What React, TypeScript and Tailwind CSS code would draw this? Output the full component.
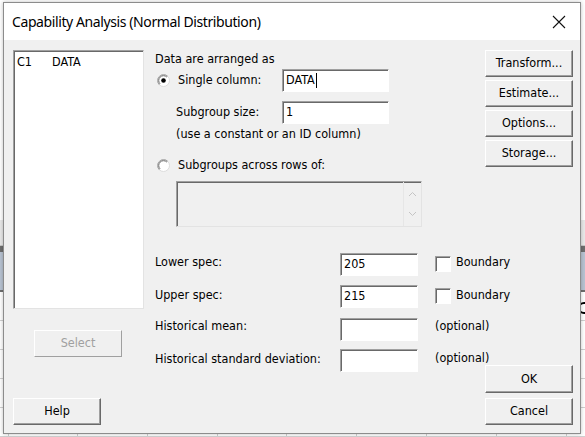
import React from 'react';

const ui = { fontFamily: '"DejaVu Sans Condensed", "DejaVu Sans", sans-serif' };

const Btn: React.FC<{ label: string; className?: string; disabled?: boolean }> = ({ label, className = '', disabled }) => (
  <div
    className={`flex h-[27px] w-[88px] shrink-0 items-center justify-center border border-t-white border-l-white border-r-[#696969] border-b-[#696969] bg-[#f0f0f0] text-[12.5px] shadow-[inset_-1px_-1px_0_#a0a0a0] ${
      disabled ? 'text-[#a0a0a0]' : 'text-black'
    } ${className}`}
  >
    {label}
  </div>
);

const Field: React.FC<{ value?: string; className?: string; caret?: boolean }> = ({ value = '', className = '', caret }) => (
  <div
    className={`flex h-[23px] shrink-0 items-center border border-t-[#a0a0a0] border-l-[#a0a0a0] border-r-white border-b-white bg-white px-[3px] text-[12.5px] shadow-[inset_1px_1px_0_#696969] ${className}`}
  >
    <span>{value}</span>
    {caret && <span className="ml-[1px] inline-block h-[15px] w-px bg-black" />}
  </div>
);

const Radio: React.FC<{ checked?: boolean }> = ({ checked }) => (
  <svg width="13" height="13" viewBox="0 0 13 13" className="shrink-0">
    <circle cx="6.5" cy="6.5" r="6" fill="#fff" stroke="#dcdcdc" strokeWidth="1" />
    <path d="M2.26 10.74 A6 6 0 0 1 10.74 2.26" fill="none" stroke="#a0a0a0" strokeWidth="1" />
    <path d="M3.1 9.9 A4.8 4.8 0 0 1 9.9 3.1" fill="none" stroke="#696969" strokeWidth="1" />
    {checked && <circle cx="6.5" cy="6.5" r="2.3" fill="#000" />}
  </svg>
);

const Check: React.FC = () => (
  <div className="h-[16px] w-[16px] shrink-0 border border-t-[#a0a0a0] border-l-[#a0a0a0] border-r-white border-b-white bg-white shadow-[inset_1px_1px_0_#696969]" />
);

const SpecRow: React.FC<{
  label: string;
  value?: string;
  extra: React.ReactNode;
  className?: string;
  labelClass?: string;
}> = ({ label, value, extra, className = '', labelClass = '' }) => (
  <div className={`flex items-center ${className}`}>
    <div className={`w-[185px] shrink-0 whitespace-nowrap ${labelClass}`}>{label}</div>
    <Field value={value} className="w-[78px]" />
    <div className="ml-[17px] flex shrink-0 items-center whitespace-nowrap">{extra}</div>
  </div>
);

export default function App() {
  const cols = [8, 77, 147, 217, 286, 356, 426, 496, 566];
  return (
    <div className="relative h-[437px] w-[585px] overflow-hidden bg-white" style={ui}>
      {/* spreadsheet behind the dialog */}
      <div className="flex h-full flex-col">
        <div className="h-[237px] bg-white" />
        <div className="h-[29px] border-b border-[#c8c8c8] bg-[#e9e9e9]" />
        <div className="h-[6px] bg-[#6e6e6e]" />
        <div className="h-[43px] border-b-2 border-[#6e6e6e] bg-[#b8c3d2]" />
        <div className="relative flex-1">
          {[0, 1, 2, 3, 4].map((i) => (
            <div key={i} className="h-[29px] border-b border-[#d0d0d0]" />
          ))}
          {cols.map((x, i) => (
            <div key={i} className="absolute top-0 h-full w-px bg-[#d0d0d0]" style={{ left: x }} />
          ))}
          <div className="absolute left-[578px] top-[10px] h-[12px] w-[8px] rounded-l-full border-2 border-r-0 border-black" />
        </div>
      </div>

      {/* dialog window */}
      <div className="absolute left-[3px] top-[2px] flex h-[432px] w-[578px] flex-col border border-[#8c8c8c] bg-[#f0f0f0] text-[12.5px] text-black shadow-[0_0_4px_rgba(0,0,0,0.25)]">
        <div className="flex h-[37px] shrink-0 items-center justify-between bg-white pl-[8px] pr-[14px]">
          <span className="text-[14px] tracking-[-0.4px]" style={{ fontFamily: '"Noto Sans", sans-serif' }}>
            Capability Analysis (Normal Distribution)
          </span>
          <svg width="14" height="14" viewBox="0 0 14 14">
            <path d="M1 1 L13 13 M13 1 L1 13" stroke="#111" strokeWidth="1.1" />
          </svg>
        </div>

        <div className="flex flex-1 pl-[9px] pr-[7px] pt-[10px] pb-[8px]">
          {/* left column */}
          <div className="flex w-[131px] shrink-0 flex-col">
            <div className="h-[259px] border border-t-[#a0a0a0] border-l-[#a0a0a0] border-r-[#e3e3e3] border-b-[#e3e3e3] bg-white shadow-[inset_1px_1px_0_#696969]">
              <div className="flex pl-[3px] pt-[2px]">
                <span className="w-[35px]">C1</span>
                <span>DATA</span>
              </div>
            </div>
            <Btn
              label="Select"
              disabled
              className="ml-[21px] mt-[21px] border-r-[#a0a0a0] border-b-[#a0a0a0] shadow-none"
            />
            <Btn label="Help" className="mt-auto w-[87px]" />
          </div>

          {/* middle column */}
          <div className="ml-[11px] flex w-[318px] shrink-0 flex-col">
            <div className="pt-[1px] leading-[16px]">Data are arranged as</div>
            <div className="mt-[2px] flex items-center">
              <div className="flex w-[127px] shrink-0 items-center gap-[8px] pl-[2px]">
                <Radio checked />
                <span>Single column:</span>
              </div>
              <Field value="DATA" caret className="w-[107px]" />
            </div>
            <div className="mt-[9px] flex items-center">
              <div className="w-[127px] shrink-0 pl-[21px]">Subgroup size:</div>
              <Field value="1" className="w-[107px]" />
            </div>
            <div className="mt-[2px] pl-[21px] leading-[16px]">(use a constant or an ID column)</div>
            <div className="mt-[14px] flex items-center gap-[8px] pl-[2px]">
              <Radio />
              <span>Subgroups across rows of:</span>
            </div>
            <div className="ml-[21px] mt-[6px] flex h-[46px] w-[246px] justify-end border border-t-[#a0a0a0] border-l-[#a0a0a0] border-r-[#e3e3e3] border-b-[#e3e3e3] shadow-[inset_1px_1px_0_#696969]">
              <div className="flex w-[18px] flex-col items-center justify-around border-l border-[#e6e6e6] py-[2px]">
                <svg width="9" height="6" viewBox="0 0 9 6">
                  <path d="M1 5 L4.5 1.5 L8 5" fill="none" stroke="#c4c4c4" />
                </svg>
                <svg width="9" height="6" viewBox="0 0 9 6">
                  <path d="M1 1 L4.5 4.5 L8 1" fill="none" stroke="#c4c4c4" />
                </svg>
              </div>
            </div>

            <SpecRow
              className="mt-[26px]"
              label="Lower spec:"
              labelClass="-mt-[4px]"
              value="205"
              extra={
                <>
                  <Check />
                  <span className="-mt-[4px] ml-[5px]">Boundary</span>
                </>
              }
            />
            <SpecRow
              className="mt-[9px]"
              label="Upper spec:"
              labelClass="-mt-[1px]"
              value="215"
              extra={
                <>
                  <Check />
                  <span className="-mt-[1px] ml-[5px]">Boundary</span>
                </>
              }
            />
            <SpecRow
              className="mt-[10px]"
              label="Historical mean:"
              labelClass="-mt-[6px]"
              extra={<span className="-mt-[6px]">(optional)</span>}
            />
            <SpecRow
              className="mt-[8px]"
              label="Historical standard deviation:"
              labelClass="-mt-[2px]"
              extra={<span className="-mt-[3px]">(optional)</span>}
            />
          </div>

          {/* right column */}
          <div className="ml-[12px] flex shrink-0 flex-col gap-[3px]">
            <Btn label="Transform..." />
            <Btn label="Estimate..." />
            <Btn label="Options..." />
            <Btn label="Storage..." />
            <Btn label="OK" className="mt-auto h-[28px] border-[#3c3c3c] border-t-[#696969] border-l-[#696969]" />
            <Btn label="Cancel" className="mt-[2px]" />
          </div>
        </div>
      </div>
    </div>
  );
}
